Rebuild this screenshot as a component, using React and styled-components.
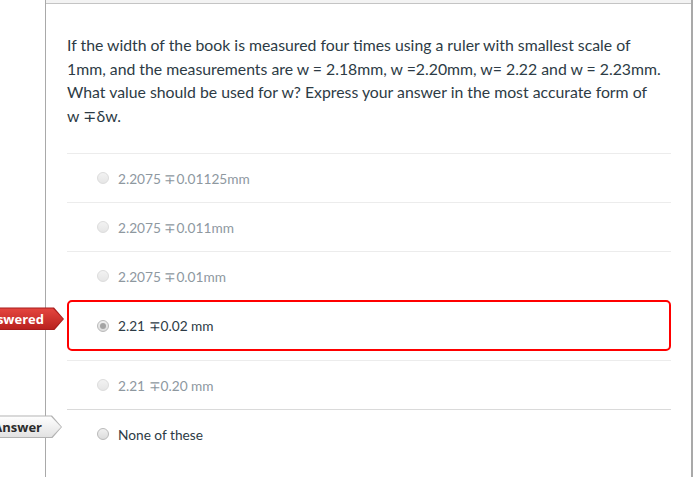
import React from "react";
import styled, { createGlobalStyle, css } from "styled-components";

const GlobalStyle = createGlobalStyle`
  body {
    margin: 0;
    background: #ffffff;
    font-family: Lato, "Open Sans", "Liberation Sans", sans-serif;
  }
`;

const Page = styled.div`
  padding-left: 45px;
  width: 648px;
  height: 477px;
  overflow: hidden;
`;

const QuestionBox = styled.div`
  border-left: 1px solid #a9a9a9;
  border-right: 2px solid #a9a9a9;
  min-height: 477px;
  box-sizing: border-box;
`;

const Header = styled.div`
  height: 3px;
  background: #f3f3f3;
  border-bottom: 1px solid #c4c4c4;
`;

const Content = styled.div`
  padding: 29px 20px 0 21px;
`;

const QuestionText = styled.p`
  margin: 0 0 26px;
  font-size: 15.8px;
  line-height: 23.6px;
  color: #2d3b45;
`;

const Answers = styled.div`
  display: flex;
  flex-direction: column;
`;

const Answer = styled.div`
  position: relative;
  display: flex;
  align-items: center;
  height: 49px;
  box-sizing: border-box;
  padding-left: 30px;
  border-top: 1px solid ${(p) => (p.$dark ? "#dadada" : "#ececec")};
  font-size: 13.7px;
  color: ${(p) => (p.$faded ? "#8e989f" : "#2d3b45")};

  ${(p) =>
    p.$selected &&
    css`
      height: 51px;
      border: 2px solid #ff0000;
      border-radius: 5px;
      padding-left: 28px;
      margin-bottom: 9px;
    `}
`;

const Radio = styled.span`
  width: 12px;
  height: 12px;
  border-radius: 50%;
  box-sizing: border-box;
  border: 1px solid ${(p) => (p.$faded ? "#dcdcdc" : "#b9b9b9")};
  background: ${(p) =>
    p.$faded
      ? "linear-gradient(#f2f2f2, #e6e6e6)"
      : "linear-gradient(#f0f0f0, #dcdcdc)"};
  margin-right: 9px;
  display: flex;
  align-items: center;
  justify-content: center;

  &::after {
    content: "";
    display: ${(p) => (p.$checked ? "block" : "none")};
    width: 6px;
    height: 6px;
    border-radius: 50%;
    background: #a4a4a4;
  }
`;

const arrow = "polygon(0 0, calc(100% - 10px) 0, 100% 50%, calc(100% - 10px) 100%, 0 100%)";

const Flag = styled.div`
  position: absolute;
  right: calc(100% + 5px);
  top: ${(p) => (p.$correct ? "5px" : "5px")};
  height: 23px;
  box-sizing: border-box;
  display: flex;
  padding: 1px;
  clip-path: ${arrow};
  background: ${(p) => (p.$correct ? "#b3b3b3" : "#a81c1c")};
`;

const FlagFill = styled.span`
  flex: 1;
  display: flex;
  align-items: center;
  padding: 0 19px 0 8px;
  white-space: nowrap;
  font-family: "Open Sans", "Liberation Sans", sans-serif;
  font-weight: 700;
  font-size: 13px;
  clip-path: ${arrow};

  ${(p) =>
    p.$correct
      ? css`
          color: #2b2b2b;
          background: linear-gradient(#ffffff, #e2e2e2);
        `
      : css`
          color: #ffffff;
          background: linear-gradient(#e5463f, #b9221f);
        `}
`;

const options = [
  { text: "2.2075 \u22130.01125mm", faded: true },
  { text: "2.2075 \u22130.011mm", faded: true },
  { text: "2.2075 \u22130.01mm", faded: true },
  { text: "2.21 \u22130.02 mm", selected: true, flag: "You Answered" },
  { text: "2.21 \u22130.20 mm", faded: true },
  { text: "None of these", dark: true, flag: "Correct Answer", correct: true },
];

export default function App() {
  return (
    <>
      <GlobalStyle />
      <Page>
        <QuestionBox>
          <Header />
          <Content>
            <QuestionText>
              If the width of the book is measured four times using a ruler with smallest scale of
              1mm, and the measurements are w = 2.18mm, w =2.20mm, w= 2.22 and w = 2.23mm.
              What value should be used for w? Express your answer in the most accurate form of
              w{"\u00a0\u2213"}&delta;w.
            </QuestionText>
            <Answers>
              {options.map((o) => (
                <Answer key={o.text} $faded={o.faded} $selected={o.selected} $dark={o.dark}>
                  {o.flag && (
                    <Flag $correct={o.correct}>
                      <FlagFill $correct={o.correct}>{o.flag}</FlagFill>
                    </Flag>
                  )}
                  <Radio $faded={o.faded} $checked={o.selected} />
                  {o.text}
                </Answer>
              ))}
            </Answers>
          </Content>
        </QuestionBox>
      </Page>
    </>
  );
}
